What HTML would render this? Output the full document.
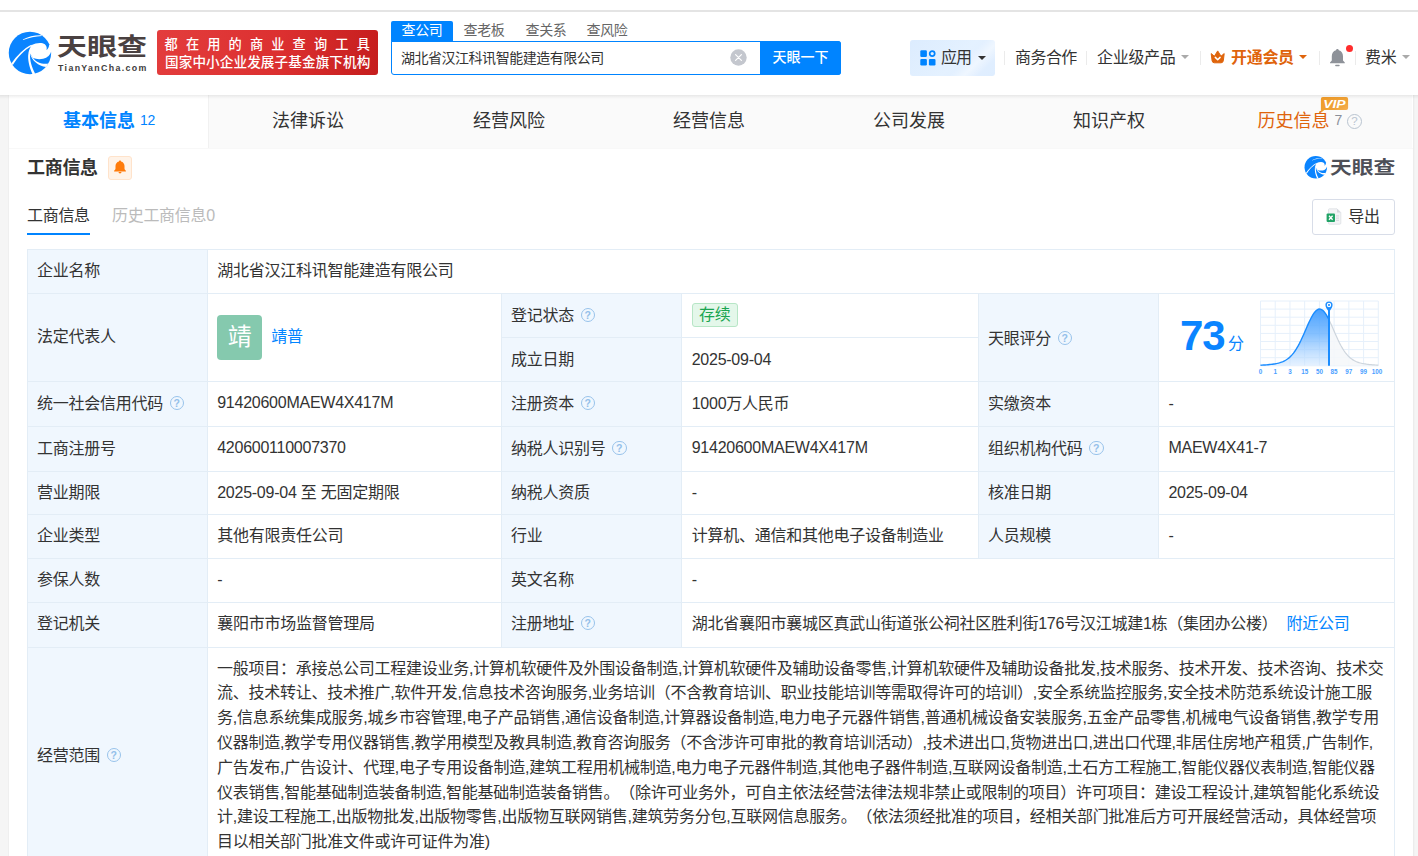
<!DOCTYPE html>
<html lang="zh-CN">
<head>
<meta charset="utf-8">
<title>湖北省汉江科讯智能建造有限公司 - 天眼查</title>
<style>
*{box-sizing:border-box;margin:0;padding:0}
html,body{width:1418px;height:856px;overflow:hidden}
body{position:relative;background:#f5f5f5;font-family:"Liberation Sans","Noto Sans CJK SC",sans-serif;font-size:16px;color:#333;-webkit-font-smoothing:antialiased}
.abs{position:absolute}
.nw{white-space:nowrap}
/* top */
#topstrip{left:0;top:0;width:1418px;height:10px;background:#fff}
#topline{left:0;top:10px;width:1418px;height:2px;background:#e4e4e4}
#header{left:0;top:12px;width:1418px;height:83px;background:#fff}
#hshadow{left:0;top:95px;width:1418px;height:4px;background:linear-gradient(rgba(0,0,0,.075),rgba(0,0,0,.03) 50%,rgba(0,0,0,0))}
/* container */
#wrap{left:9px;top:95px;width:1404px;height:762px;background:#fff}
#navbar{left:9px;top:95px;width:1403px;height:53px;background:#fafafa}
.tab{top:98px;height:51px;line-height:47px;font-size:18px;color:#333;white-space:nowrap}
/* table */
.c{position:absolute;border-right:1px solid #e3edf6;border-bottom:1px solid #e3edf6;white-space:nowrap;font-size:16px;color:#333}
.l{background:#f0f7fe}
.t{position:absolute;white-space:nowrap;font-size:16px;line-height:22px;color:#333}
.q{display:inline-block;width:14.4px;height:14.4px;border:1.4px solid #98c3eb;border-radius:50%;color:#94c0ea;font-size:10.5px;font-weight:bold;line-height:12px;text-align:center;vertical-align:2.3px;margin-left:6.6px;letter-spacing:0}

.stab{top:21px;width:62px;height:20px;line-height:19px;text-align:center;font-size:14px;color:#666;letter-spacing:-0.4px}
.hn{top:47px;font-size:16px;line-height:22px;color:#333;letter-spacing:-0.3px}
.car{width:0;height:0;border:4px solid transparent;border-top-width:4px;border-bottom-width:0}
.vs{top:51px;width:1px;height:14px;background:#ebebeb}

.tc{width:200px;text-align:center}

.lk{color:#0084ff}
.ava{display:inline-block;width:45px;height:45px;border-radius:4px;background:#85c9ae;color:#fff;font-size:24px;line-height:43px;text-align:center;vertical-align:middle;letter-spacing:0}
.tag{display:inline-block;height:24px;line-height:22px;padding:0 6.4px;border:1px solid #b7e6c6;background:#e4f7ea;color:#1aa550;border-radius:3px;font-size:16px;vertical-align:middle;position:relative;top:-1.8px}
.c,.pl{letter-spacing:-0.25px;text-spacing-trim:space-all}
</style>
</head>
<body>
<div id="topstrip" class="abs"></div>
<div id="wrap" class="abs"></div>
<div id="navbar" class="abs"></div>
<div class="abs" style="left:8px;top:95px;width:1px;height:761px;background:#efefef"></div>
<div class="abs" style="left:1413px;top:95px;width:1px;height:761px;background:#ececec"></div>
<div class="abs" style="left:1414px;top:95px;width:1px;height:761px;background:#f2f2f2"></div>
<div id="header" class="abs"></div>
<div id="topline" class="abs"></div>
<div id="hshadow" class="abs" style="z-index:5"></div>

<!-- HEADER-CONTENT -->
<!-- logo -->
<svg class="abs" style="left:4px;top:26px" width="60" height="54" viewBox="0 0 951 856">
  <circle cx="411.5" cy="427" r="336" fill="#0a84ff"/>
  <path d="M298 214 C385 168 500 143 600 149 L598 157 C500 160 400 184 302 221 Z" fill="#fff"/>
  <path d="M440 302 C505 266 600 255 648 290 C678 318 682 352 673 380 C695 368 714 335 716 300 L800 290 L800 404 L747 400 C738 452 690 505 620 520 C560 532 505 526 460 508 L414 440 L385 450 C388 400 410 345 440 302 Z" fill="#fff"/>
  <path d="M432 296 C320 352 200 470 116 596 L140 620 C215 490 325 375 446 312 Z" fill="#fff"/>
  <path d="M385 448 C375 520 395 640 452 765 L495 756 C440 650 405 540 414 438 Z" fill="#fff"/>
  <path d="M414 438 C440 545 545 632 668 650 L704 596 C600 612 510 572 460 506 Z" fill="#fff"/>
</svg>
<div class="abs nw" id="lgcn" style="left:57px;top:27px;font-size:24.4px;line-height:40px;font-weight:700;color:#4a4141;transform-origin:0 50%;transform:scaleX(1.23);letter-spacing:0">天眼查</div>
<div class="abs nw" id="lgen" style="left:58px;top:61px;font-size:8.8px;line-height:14px;font-weight:bold;color:#403c3c;letter-spacing:1.36px">TianYanCha.com</div>
<!-- red banner -->
<div class="abs" style="left:157px;top:30px;width:221px;height:45px;border-radius:3px;background:linear-gradient(100deg,#e33d3d 0%,#dc3030 55%,#c51d1d 100%)"></div>
<div class="abs nw" id="rb1" style="left:164.6px;top:36.4px;font-size:13.2px;line-height:18px;font-weight:500;color:#fff;letter-spacing:8.15px">都在用的商业查询工具</div>
<div class="abs nw" id="rb2" style="left:165px;top:54.2px;font-size:13.6px;line-height:18px;font-weight:500;color:#fff;letter-spacing:0.1px">国家中小企业发展子基金旗下机构</div>
<!-- search -->
<div class="abs" style="left:391px;top:21px;width:62px;height:21px;background:#0084ff;border-radius:2px 2px 0 0"></div>
<div class="abs nw stab" style="left:391px;color:#fff;font-weight:400">查公司</div>
<div class="abs nw stab" style="left:453px">查老板</div>
<div class="abs nw stab" style="left:515px">查关系</div>
<div class="abs nw stab" style="left:576px">查风险</div>
<div class="abs" style="left:391px;top:41px;width:450px;height:34px;border:1px solid #0084ff;border-radius:0 3px 3px 3px;background:#fff"></div>
<div class="abs" style="left:760px;top:41px;width:81px;height:34px;background:#0084ff;border-radius:0 3px 3px 0"></div>
<div class="abs nw" id="sinp" style="left:401px;top:48px;font-size:14px;line-height:20px;color:#333;letter-spacing:-0.48px">湖北省汉江科讯智能建造有限公司</div>
<svg class="abs" style="left:730px;top:49px" width="17" height="17" viewBox="0 0 17 17"><circle cx="8.5" cy="8.5" r="8.2" fill="#c4c7ce"/><path d="M5.6 5.6 L11.4 11.4 M11.4 5.6 L5.6 11.4" stroke="#fff" stroke-width="1.2" stroke-linecap="round"/></svg>
<div class="abs nw" id="sbtn" style="left:760px;top:47px;width:81px;text-align:center;font-size:14px;line-height:20px;color:#fff;font-weight:500">天眼一下</div>
<!-- right nav -->
<div class="abs" style="left:910px;top:40px;width:85px;height:36px;border-radius:3px;background:linear-gradient(135deg,rgba(255,255,255,0) 62%,rgba(255,255,255,.45) 74%,rgba(255,255,255,0) 86%),linear-gradient(135deg,#dcecfe 0%,#e4f1ff 55%,#deedff 100%)"></div>
<svg class="abs" style="left:920px;top:50px" width="16" height="16" viewBox="0 0 16 16">
  <rect x="0.3" y="0.3" width="6.6" height="6.6" rx="1.2" fill="#0084ff"/>
  <rect x="0.3" y="8.9" width="6.6" height="6.6" rx="1.2" fill="#0084ff"/>
  <rect x="8.9" y="8.9" width="6.6" height="6.6" rx="1.2" fill="#0084ff"/>
  <circle cx="12.2" cy="3.6" r="2.5" fill="none" stroke="#0084ff" stroke-width="1.7"/>
</svg>
<div class="abs nw hn" style="left:941px;letter-spacing:-0.9px">应用</div>
<div class="abs car" style="left:978px;top:56px;border-top-color:#333"></div>
<div class="abs vs" style="left:1004px"></div>
<div class="abs nw hn" style="left:1015px;letter-spacing:-0.55px">商务合作</div>
<div class="abs vs" style="left:1086px"></div>
<div class="abs nw hn" style="left:1097px">企业级产品</div>
<div class="abs car" style="left:1181px;top:55px;border-top-color:#aaa"></div>
<div class="abs vs" style="left:1200px"></div>
<svg class="abs" style="left:1210px;top:50px" width="16" height="14" viewBox="0 0 16 14">
  <path d="M1.2 3.6 L4.4 6.2 L7.7 0.9 L11 6.2 L14.2 3.6 L13.3 10.8 Q13 12.8 11 12.8 H4.4 Q2.4 12.8 2.1 10.8 Z" fill="#df640c" stroke="#df640c" stroke-width="1" stroke-linejoin="round"/>
  <path d="M5.3 7.4 L7.7 9.7 L10.1 7.4" fill="none" stroke="#fff" stroke-width="1.5" stroke-linecap="round" stroke-linejoin="round"/>
</svg>
<div class="abs nw hn" style="left:1231px;color:#df640c;font-weight:bold">开通会员</div>
<div class="abs car" style="left:1299px;top:55px;border-top-color:#df640c"></div>
<div class="abs vs" style="left:1319px"></div>
<svg class="abs" style="left:1329px;top:48px" width="17" height="19" viewBox="0 0 17 19">
  <path d="M8.4 0.9 C9.2 0.9 9.8 1.5 9.8 2.3 C12.6 3 14 5.4 14 8.3 V12.6 L15.8 14.4 V15.3 H1 V14.4 L2.8 12.6 V8.3 C2.8 5.4 4.2 3 7 2.3 C7 1.5 7.6 0.9 8.4 0.9 Z" fill="#8e9299"/>
  <rect x="6.1" y="16.7" width="4.6" height="1.6" rx="0.8" fill="#8e9299"/>
</svg>
<div class="abs" style="left:1346px;top:44.5px;width:7px;height:7px;border-radius:50%;background:#ff2d2d"></div>
<div class="abs vs" style="left:1355px"></div>
<div class="abs nw hn" style="left:1365px">费米</div>
<div class="abs car" style="left:1402px;top:54.5px;border-top-color:#aaa"></div>


<!-- NAV-TABS -->
<div class="abs" style="left:9px;top:148px;width:1404px;height:1px;background:#f8f8f8;z-index:1"></div>
<div class="abs" style="left:9px;top:95px;width:199px;height:53px;background:#fff"></div>
<div class="abs" style="left:208px;top:95px;width:1px;height:53px;background:#f1f1f1"></div>
<div class="abs nw tab" style="left:63px;color:#0084ff;font-weight:bold" id="tb1">基本信息</div>
<div class="abs nw" style="left:140px;top:111px;font-size:14px;line-height:18px;color:#0084ff;letter-spacing:-0.3px" id="tb1n">12</div>
<div class="abs nw tab tc" style="left:208px">法律诉讼</div>
<div class="abs nw tab tc" style="left:409px">经营风险</div>
<div class="abs nw tab tc" style="left:609px">经营信息</div>
<div class="abs nw tab tc" style="left:809px">公司发展</div>
<div class="abs nw tab tc" style="left:1009px">知识产权</div>
<div class="abs nw tab" style="left:1257.5px;color:#df640c" id="tb7">历史信息</div>
<div class="abs nw" style="left:1334.5px;top:111px;font-size:14px;line-height:18px;color:#8a8f9a">7</div>
<div class="abs" style="left:1347px;top:113.6px;width:15px;height:15px;border:1.2px solid #b9c4d0;border-radius:50%;font-size:11.5px;line-height:13px;text-align:center;color:#b9c4d0">?</div>
<svg class="abs" style="left:1320px;top:96px" width="30" height="18" viewBox="0 0 30 18">
  <defs><linearGradient id="vg" x1="0" y1="0" x2="1" y2="1"><stop offset="0" stop-color="#ef9a28"/><stop offset="0.6" stop-color="#f0a236"/><stop offset="1" stop-color="#f6b55c"/></linearGradient></defs>
  <path d="M3 1 H26.1 A2 2 0 0 1 28.1 3 V12 A2 2 0 0 1 26.1 14 H4.4 L0.9 16.8 V3 A2 2 0 0 1 3 1 Z" fill="url(#vg)"/>
  <text x="14.4" y="11.7" font-family="Liberation Sans, sans-serif" font-size="11.8" font-weight="bold" font-style="italic" fill="#fff" text-anchor="middle" textLength="22.5" lengthAdjust="spacingAndGlyphs">VIP</text>
</svg>


<!-- SECTION-HEAD -->
<div class="abs nw" id="sh1" style="left:27px;top:155px;font-size:18px;line-height:26px;font-weight:bold;color:#333;letter-spacing:-0.3px">工商信息</div>
<div class="abs" style="left:108px;top:156px;width:24px;height:24px;border:1px solid #ffe3cb;background:#fff3e8;border-radius:3px"></div>
<svg class="abs" style="left:112.8px;top:159.6px" width="14" height="14.5" viewBox="0 0 14 14.5">
  <path d="M7 0.5 C7.6 0.5 8 0.9 8 1.5 C10.2 2 11.5 3.9 11.5 6 V8.6 C11.5 9.5 12.3 10.2 12.9 10.8 V11.5 H1.1 V10.8 C1.7 10.2 2.5 9.5 2.5 8.6 V6 C2.5 3.9 3.8 2 6 1.5 C6 0.9 6.4 0.5 7 0.5 Z" fill="#ff7b0a"/>
  <path d="M5.5 12 H8.5 A1.5 1.4 0 0 1 5.5 12 Z" fill="#ff7b0a"/>
</svg>
<div class="abs nw" id="st1" style="left:27px;top:205px;font-size:16px;line-height:22px;color:#333;letter-spacing:-0.3px">工商信息</div>
<div class="abs" style="left:27px;top:233px;width:63px;height:2px;background:#0084ff"></div>
<div class="abs nw" id="st2" style="left:112px;top:205px;font-size:16px;line-height:22px;color:#bbb;letter-spacing:-0.3px">历史工商信息0</div>
<!-- watermark logo -->
<svg class="abs" id="wmlogo" style="left:1302.1px;top:152.9px" width="31.84" height="28.66" viewBox="0 0 951 856">
  <circle cx="411.5" cy="427" r="336" fill="#0a84ff"/>
  <path d="M298 214 C385 168 500 143 600 149 L598 157 C500 160 400 184 302 221 Z" fill="#fff"/>
  <path d="M440 302 C505 266 600 255 648 290 C678 318 682 352 673 380 C695 368 714 335 716 300 L800 290 L800 404 L747 400 C738 452 690 505 620 520 C560 532 505 526 460 508 L414 440 L385 450 C388 400 410 345 440 302 Z" fill="#fff"/>
  <path d="M432 296 C320 352 200 470 116 596 L140 620 C215 490 325 375 446 312 Z" fill="#fff"/>
  <path d="M385 448 C375 520 395 640 452 765 L495 756 C440 650 405 540 414 438 Z" fill="#fff"/>
  <path d="M414 438 C440 545 545 632 668 650 L704 596 C600 612 510 572 460 506 Z" fill="#fff"/>
</svg>
<div class="abs nw" id="wm" style="left:1329.5px;top:153.4px;font-size:17.7px;line-height:30px;font-weight:bold;color:#4d4f57;transform-origin:0 50%;transform:scaleX(1.23)">天眼查</div>
<!-- export -->
<div class="abs" style="left:1312px;top:199px;width:83px;height:36px;border:1px solid #d8dde8;border-radius:3px;background:#fff"></div>
<svg class="abs" style="left:1326px;top:208px" width="16" height="17" viewBox="0 0 16 17">
  <path d="M3.5 0.8 H11 L14.8 4.6 V15.2 A1 1 0 0 1 13.8 16.2 H3.5 A1 1 0 0 1 2.5 15.2 V1.8 A1 1 0 0 1 3.5 0.8 Z" fill="#f3f4f6" stroke="#dcdfe4" stroke-width="0.8"/>
  <path d="M11 0.8 V4.6 H14.8 Z" fill="#d5d8de"/>
  <rect x="10" y="7.4" width="3" height="1" fill="#d5d8de"/><rect x="10" y="9.6" width="3" height="1" fill="#d5d8de"/><rect x="10" y="11.8" width="3" height="1" fill="#d5d8de"/>
  <rect x="0.6" y="5.6" width="8.4" height="8.4" rx="1" fill="#21a366"/>
  <path d="M3 7.8 L6.6 11.8 M6.6 7.8 L3 11.8" stroke="#fff" stroke-width="1.3"/>
</svg>
<div class="abs nw" id="exp" style="left:1348.3px;top:206px;font-size:16px;line-height:22px;color:#333;letter-spacing:-0.3px">导出</div>


<!-- TABLE -->
<div class="abs" style="left:27px;top:249px;width:1368px;height:1px;background:#e3edf6"></div>
<div class="abs" style="left:27px;top:249px;width:1px;height:620px;background:#e3edf6"></div>
<div class="c l" style="left:28px;top:250px;width:180px;height:44px;line-height:42.0px;padding-left:9px">企业名称</div>
<div class="c" style="left:208px;top:250px;width:1187px;height:44px;line-height:42.0px;padding-left:9.2px">湖北省汉江科讯智能建造有限公司</div>
<div class="c l" style="left:28px;top:294px;width:180px;height:88px;line-height:86.0px;padding-left:9px">法定代表人</div>
<div class="c" style="left:208px;top:294px;width:294px;height:88px;line-height:85px;padding-left:9.2px"><span class="ava">靖</span><span class="lk" style="margin-left:9px">靖普</span></div>
<div class="c l" style="left:502px;top:294px;width:180px;height:44px;line-height:43px;padding-left:9.0px">登记状态<span class="q">?</span></div>
<div class="c" style="left:682px;top:294px;width:297px;height:44px;line-height:43px;padding-left:9.7px"><span class="tag">存续</span></div>
<div class="c l" style="left:502px;top:338px;width:180px;height:44px;line-height:43px;padding-left:9.0px">成立日期</div>
<div class="c" style="left:682px;top:338px;width:297px;height:44px;line-height:43px;padding-left:9.7px">2025-09-04</div>
<div class="c l" style="left:979px;top:294px;width:180px;height:88px;line-height:89px;padding-left:9px">天眼评分<span class="q">?</span></div>
<div class="c" style="left:1159px;top:294px;width:236px;height:88px;line-height:87px;padding-left:9.4px" id="score"></div>
<div class="c l" style="left:28px;top:382px;width:180px;height:45px;line-height:44px;padding-left:9px">统一社会信用代码<span class="q">?</span></div>
<div class="c" style="left:208px;top:382px;width:294px;height:45px;line-height:42px;padding-left:9.2px">91420600MAEW4X417M</div>
<div class="c l" style="left:502px;top:382px;width:180px;height:45px;line-height:44px;padding-left:9.0px">注册资本<span class="q">?</span></div>
<div class="c" style="left:682px;top:382px;width:297px;height:45px;line-height:44px;padding-left:9.7px">1000万人民币</div>
<div class="c l" style="left:979px;top:382px;width:180px;height:45px;line-height:44px;padding-left:9px">实缴资本</div>
<div class="c" style="left:1159px;top:382px;width:236px;height:45px;line-height:44px;padding-left:9.4px">-</div>
<div class="c l" style="left:28px;top:427px;width:180px;height:45px;line-height:43.0px;padding-left:9px">工商注册号</div>
<div class="c" style="left:208px;top:427px;width:294px;height:45px;line-height:42px;padding-left:9.2px">420600110007370</div>
<div class="c l" style="left:502px;top:427px;width:180px;height:45px;line-height:43.0px;padding-left:9.0px">纳税人识别号<span class="q">?</span></div>
<div class="c" style="left:682px;top:427px;width:297px;height:45px;line-height:42px;padding-left:9.7px">91420600MAEW4X417M</div>
<div class="c l" style="left:979px;top:427px;width:180px;height:45px;line-height:43.0px;padding-left:9px">组织机构代码<span class="q">?</span></div>
<div class="c" style="left:1159px;top:427px;width:236px;height:45px;line-height:42px;padding-left:9.4px">MAEW4X41-7</div>
<div class="c l" style="left:28px;top:472px;width:180px;height:43px;line-height:42px;padding-left:9px">营业期限</div>
<div class="c" style="left:208px;top:472px;width:294px;height:43px;line-height:42px;padding-left:9.2px">2025-09-04 至 无固定期限</div>
<div class="c l" style="left:502px;top:472px;width:180px;height:43px;line-height:42px;padding-left:9.0px">纳税人资质</div>
<div class="c" style="left:682px;top:472px;width:297px;height:43px;line-height:42px;padding-left:9.7px">-</div>
<div class="c l" style="left:979px;top:472px;width:180px;height:43px;line-height:42px;padding-left:9px">核准日期</div>
<div class="c" style="left:1159px;top:472px;width:236px;height:43px;line-height:42px;padding-left:9.4px">2025-09-04</div>
<div class="c l" style="left:28px;top:515px;width:180px;height:44px;line-height:42.0px;padding-left:9px">企业类型</div>
<div class="c" style="left:208px;top:515px;width:294px;height:44px;line-height:42.0px;padding-left:9.2px">其他有限责任公司</div>
<div class="c l" style="left:502px;top:515px;width:180px;height:44px;line-height:42.0px;padding-left:9.0px">行业</div>
<div class="c" style="left:682px;top:515px;width:297px;height:44px;line-height:42.0px;padding-left:9.7px">计算机、通信和其他电子设备制造业</div>
<div class="c l" style="left:979px;top:515px;width:180px;height:44px;line-height:42.0px;padding-left:9px">人员规模</div>
<div class="c" style="left:1159px;top:515px;width:236px;height:44px;line-height:42.0px;padding-left:9.4px">-</div>
<div class="c l" style="left:28px;top:559px;width:180px;height:44px;line-height:42.0px;padding-left:9px">参保人数</div>
<div class="c" style="left:208px;top:559px;width:294px;height:44px;line-height:42.0px;padding-left:9.2px">-</div>
<div class="c l" style="left:502px;top:559px;width:180px;height:44px;line-height:42.0px;padding-left:9.0px">英文名称</div>
<div class="c" style="left:682px;top:559px;width:713px;height:44px;line-height:42.0px;padding-left:9.7px">-</div>
<div class="c l" style="left:28px;top:603px;width:180px;height:45px;line-height:42px;padding-left:9px">登记机关</div>
<div class="c" style="left:208px;top:603px;width:294px;height:45px;line-height:42px;padding-left:9.2px">襄阳市市场监督管理局</div>
<div class="c l" style="left:502px;top:603px;width:180px;height:45px;line-height:42px;padding-left:9.0px">注册地址<span class="q">?</span></div>
<div class="c" style="left:682px;top:603px;width:713px;height:45px;line-height:42px;padding-left:9.7px"><span id="addr">湖北省襄阳市襄城区真武山街道张公祠社区胜利街176号汉江城建1栋（集团办公楼）</span><span class="lk" id="near" style="margin-left:9px">附近公司</span></div>
<div class="c l" style="left:28px;top:648px;width:180px;height:216px;line-height:215px;padding-left:9px">经营范围<span class="q">?</span></div>
<div class="c" style="left:208px;top:648px;width:1187px;height:216px;line-height:215px;padding-left:9.2px"></div>
<div class="abs" id="scope" style="left:217px;top:656.6px;width:1175px;line-height:24.8px;font-size:16px;color:#333">
<div class="nw pl" id="pl1">一般项目：承接总公司工程建设业务,计算机软硬件及外围设备制造,计算机软硬件及辅助设备零售,计算机软硬件及辅助设备批发,技术服务、技术开发、技术咨询、技术交</div>
<div class="nw pl" id="pl2">流、技术转让、技术推广,软件开发,信息技术咨询服务,业务培训（不含教育培训、职业技能培训等需取得许可的培训）,安全系统监控服务,安全技术防范系统设计施工服</div>
<div class="nw pl" id="pl3" style="letter-spacing:-0.228px">务,信息系统集成服务,城乡市容管理,电子产品销售,通信设备制造,计算器设备制造,电力电子元器件销售,普通机械设备安装服务,五金产品零售,机械电气设备销售,教学专用</div>
<div class="nw pl" id="pl4">仪器制造,教学专用仪器销售,教学用模型及教具制造,教育咨询服务（不含涉许可审批的教育培训活动）,技术进出口,货物进出口,进出口代理,非居住房地产租赁,广告制作,</div>
<div class="nw pl" id="pl5" style="letter-spacing:-0.227px">广告发布,广告设计、代理,电子专用设备制造,建筑工程用机械制造,电力电子元器件制造,其他电子器件制造,互联网设备制造,土石方工程施工,智能仪器仪表制造,智能仪器</div>
<div class="nw pl" id="pl6">仪表销售,智能基础制造装备制造,智能基础制造装备销售。（除许可业务外，可自主依法经营法律法规非禁止或限制的项目）许可项目：建设工程设计,建筑智能化系统设</div>
<div class="nw pl" id="pl7">计,建设工程施工,出版物批发,出版物零售,出版物互联网销售,建筑劳务分包,互联网信息服务。（依法须经批准的项目，经相关部门批准后方可开展经营活动，具体经营项</div>
<div class="nw pl" id="pl8">目以相关部门批准文件或许可证件为准)</div>
</div>
<!-- SCORE -->
<div class="abs nw" id="sc73" style="left:1180px;top:313.4px;font-size:42px;line-height:46px;font-weight:bold;color:#0a84ff;letter-spacing:-1.2px">73</div>
<div class="abs nw" id="scfen" style="left:1228px;top:333px;font-size:16px;line-height:22px;color:#0a84ff">分</div>
<svg class="abs" id="chart" style="left:1255px;top:296px" width="135" height="84" viewBox="0 0 135 84">
<defs><linearGradient id="cg" x1="0" y1="0" x2="0" y2="1"><stop offset="0" stop-color="#3f9cff" stop-opacity="0.95"/><stop offset="0.45" stop-color="#69b2ff" stop-opacity="0.8"/><stop offset="1" stop-color="#cfe6ff" stop-opacity="0.55"/></linearGradient></defs>
<path d="M5.5 5.0V69.8M20.22 5.0V69.8M34.95 5.0V69.8M49.67 5.0V69.8M64.4 5.0V69.8M79.12 5.0V69.8M93.85 5.0V69.8M108.58 5.0V69.8M123.3 5.0V69.8M5.5 5.0H123.3M5.5 13.1H123.3M5.5 21.2H123.3M5.5 29.3H123.3M5.5 37.4H123.3M5.5 45.5H123.3M5.5 53.6H123.3M5.5 61.7H123.3M5.5 69.8H123.3" stroke="#e6f0fb" stroke-width="1" fill="none"/>
<path d="M74.0 23.78 L75.5 26.96 L77.0 30.32 L78.5 33.76 L80.0 37.21 L81.5 40.59 L83.0 43.85 L84.5 46.92 L86.0 49.77 L87.5 52.38 L89.0 54.74 L90.5 56.84 L92.0 58.68 L93.5 60.3 L95.0 61.69 L96.5 62.87 L98.0 63.89 L99.5 64.74 L101.0 65.47 L102.5 66.07 L104.0 66.58 L105.5 67.01 L107.0 67.38 L108.5 67.69 L110.0 67.95 L111.5 68.18 L113.0 68.37 L114.5 68.54 L116.0 68.68 L117.5 68.81 L119.0 68.92 L120.5 69.02 L122.0 69.1 L123.3 69.16 L123.3 69.6 L74.0 69.6 Z" fill="#f5f7f9" fill-opacity="0.85"/>
<path d="M74.0 23.78 L75.5 26.96 L77.0 30.32 L78.5 33.76 L80.0 37.21 L81.5 40.59 L83.0 43.85 L84.5 46.92 L86.0 49.77 L87.5 52.38 L89.0 54.74 L90.5 56.84 L92.0 58.68 L93.5 60.3 L95.0 61.69 L96.5 62.87 L98.0 63.89 L99.5 64.74 L101.0 65.47 L102.5 66.07 L104.0 66.58 L105.5 67.01 L107.0 67.38 L108.5 67.69 L110.0 67.95 L111.5 68.18 L113.0 68.37 L114.5 68.54 L116.0 68.68 L117.5 68.81 L119.0 68.92 L120.5 69.02 L122.0 69.1 L123.3 69.16" fill="none" stroke="#cdd5dd" stroke-width="1.2"/>
<path d="M5.5 69.18 L7.0 69.11 L8.5 69.03 L10.0 68.93 L11.5 68.83 L13.0 68.7 L14.5 68.56 L16.0 68.39 L17.5 68.2 L19.0 67.98 L20.5 67.73 L22.0 67.42 L23.5 67.07 L25.0 66.65 L26.5 66.15 L28.0 65.55 L29.5 64.85 L31.0 64.01 L32.5 63.02 L34.0 61.85 L35.5 60.49 L37.0 58.91 L38.5 57.1 L40.0 55.03 L41.5 52.71 L43.0 50.13 L44.5 47.31 L46.0 44.27 L47.5 41.04 L49.0 37.67 L50.5 34.22 L52.0 30.77 L53.5 27.4 L55.0 24.19 L56.5 21.24 L58.0 18.62 L59.5 16.43 L61.0 14.74 L62.5 13.6 L64.0 13.05 L65.5 13.11 L67.0 13.78 L68.5 15.04 L70.0 16.83 L71.5 19.11 L73.0 21.8 L74.0 23.78 L74.0 69.6 L5.5 69.6 Z" fill="url(#cg)"/>
<path d="M5.5 69.18 L7.0 69.11 L8.5 69.03 L10.0 68.93 L11.5 68.83 L13.0 68.7 L14.5 68.56 L16.0 68.39 L17.5 68.2 L19.0 67.98 L20.5 67.73 L22.0 67.42 L23.5 67.07 L25.0 66.65 L26.5 66.15 L28.0 65.55 L29.5 64.85 L31.0 64.01 L32.5 63.02 L34.0 61.85 L35.5 60.49 L37.0 58.91 L38.5 57.1 L40.0 55.03 L41.5 52.71 L43.0 50.13 L44.5 47.31 L46.0 44.27 L47.5 41.04 L49.0 37.67 L50.5 34.22 L52.0 30.77 L53.5 27.4 L55.0 24.19 L56.5 21.24 L58.0 18.62 L59.5 16.43 L61.0 14.74 L62.5 13.6 L64.0 13.05 L65.5 13.11 L67.0 13.78 L68.5 15.04 L70.0 16.83 L71.5 19.11 L73.0 21.8 L74.0 23.78" fill="none" stroke="#1a8cff" stroke-width="1.4"/>
<path d="M74.0 13V69.8" stroke="#1a8cff" stroke-width="2"/>
<path d="M74.0 16.2 C72.8 14.0 70.4 11.6 70.4 9.0 A3.6 3.6 0 1 1 77.6 9.0 C77.6 11.6 75.2 14.0 74.0 16.2 Z" fill="#1a8cff"/>
<circle cx="74.0" cy="9.0" r="2.2" fill="#fff"/><circle cx="74.0" cy="9.0" r="1.05" fill="#1a8cff"/>
<text x="5.5" y="77.9" font-family="Liberation Sans, sans-serif" font-size="6.3" font-weight="bold" fill="#4aa0ff" text-anchor="middle">0</text>
<text x="20.22" y="77.9" font-family="Liberation Sans, sans-serif" font-size="6.3" font-weight="bold" fill="#4aa0ff" text-anchor="middle">1</text>
<text x="34.95" y="77.9" font-family="Liberation Sans, sans-serif" font-size="6.3" font-weight="bold" fill="#4aa0ff" text-anchor="middle">3</text>
<text x="49.67" y="77.9" font-family="Liberation Sans, sans-serif" font-size="6.3" font-weight="bold" fill="#4aa0ff" text-anchor="middle">15</text>
<text x="64.4" y="77.9" font-family="Liberation Sans, sans-serif" font-size="6.3" font-weight="bold" fill="#4aa0ff" text-anchor="middle">50</text>
<text x="79.12" y="77.9" font-family="Liberation Sans, sans-serif" font-size="6.3" font-weight="bold" fill="#4aa0ff" text-anchor="middle">85</text>
<text x="93.85" y="77.9" font-family="Liberation Sans, sans-serif" font-size="6.3" font-weight="bold" fill="#4aa0ff" text-anchor="middle">97</text>
<text x="108.58" y="77.9" font-family="Liberation Sans, sans-serif" font-size="6.3" font-weight="bold" fill="#4aa0ff" text-anchor="middle">99</text>
<text x="122.1" y="77.9" font-family="Liberation Sans, sans-serif" font-size="6.3" font-weight="bold" fill="#4aa0ff" text-anchor="middle">100</text>
</svg>
<!-- /SCORE -->

</body>
</html>
